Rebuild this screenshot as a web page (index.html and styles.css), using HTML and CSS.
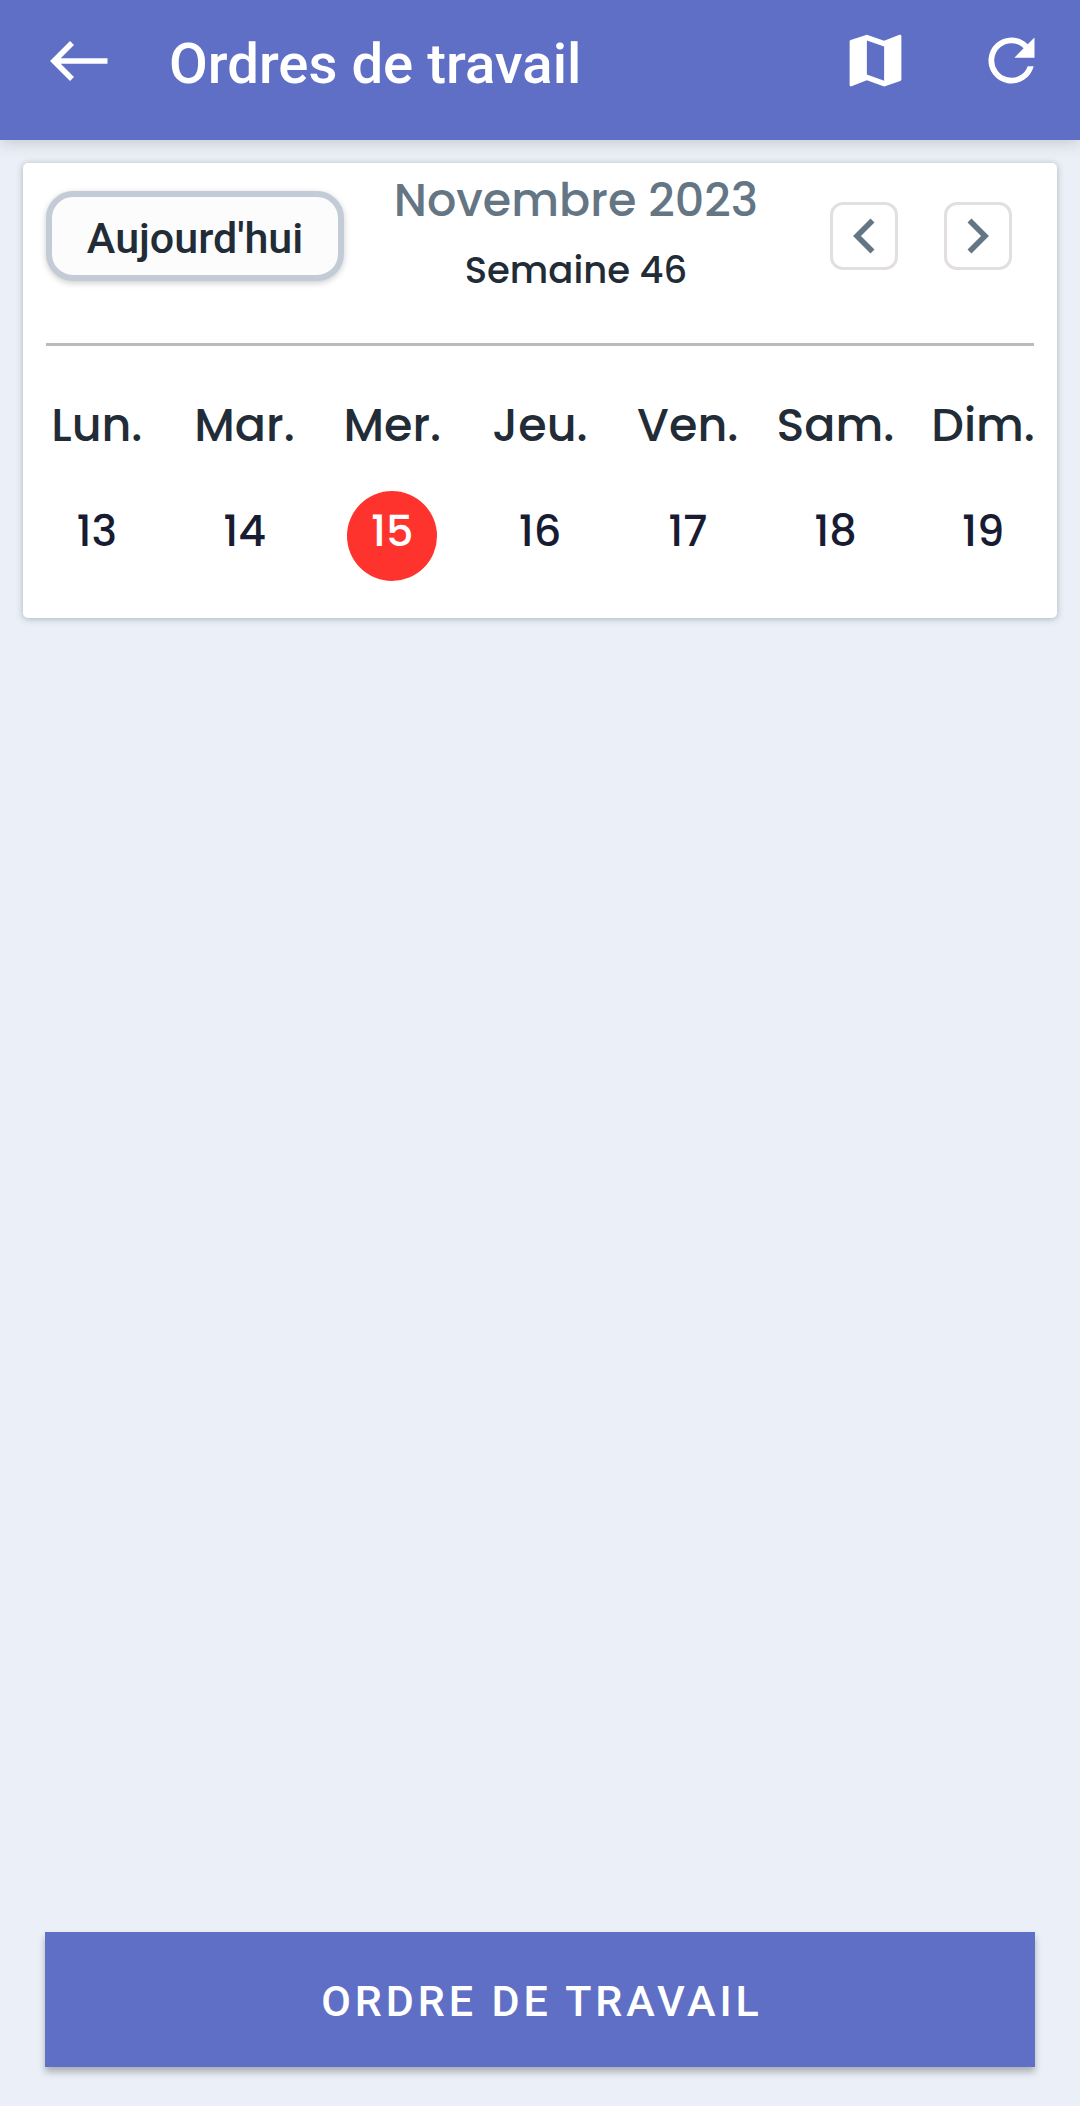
FILE: index.html
```html
<!DOCTYPE html>
<html lang="fr">
<head>
    <meta charset="UTF-8">
    <meta name="viewport" content="width=device-width, initial-scale=1.0">
    <title>Ordres de travail</title>
    <link rel="stylesheet" href="styles.css">
</head>
<body>
    <header class="topbar">
        <svg class="back-icon" viewBox="0 0 58 40">
            <path d="M57.500 20H5M22 2L4 20l18 18" fill="none" stroke="#fff" stroke-width="5.6"/>
        </svg>
        <h1 class="title">Ordres de travail</h1>
        <svg class="action-icon" viewBox="0 0 24 24">
            <path fill="#fff" d="M20.5 3l-.16.03L15 5.1 9 3 3.36 4.9c-.21.07-.36.25-.36.48V20.5c0 .28.22.5.5.5l.16-.03L9 18.9l6 2.1 5.64-1.9c.21-.07.36-.25.36-.48V3.5c0-.28-.22-.5-.5-.5zM15 19l-6-2.11V5l6 2.11V19z"/>
        </svg>
        <svg class="action-icon" viewBox="0 0 24 24">
            <path fill="#fff" d="M17.65 6.35A7.96 7.96 0 0 0 12 4a8 8 0 1 0 7.73 10h-2.08A6 6 0 1 1 12 6c1.66 0 3.14.69 4.22 1.78L13 11h7V4l-2.35 2.35z"/>
        </svg>
    </header>

    <!-- Calendrier de la semaine -->
    <main class="calendar">
        <div class="calendar-head">
            <button class="today-button">Aujourd'hui</button>
            <div class="period">
                <div class="month">Novembre 2023</div>
                <div class="week">Semaine 46</div>
            </div>
            <div class="nav">
                <button class="nav-button">
                    <svg class="chevron" viewBox="0 0 22 36"><path d="M19.500 2.500L4 18l15.500 15.500"/></svg>
                </button>
                <button class="nav-button">
                    <svg class="chevron" viewBox="0 0 22 36"><path d="M2.500 2.500L18 18 2.500 33.500"/></svg>
                </button>
            </div>
        </div>
        <div class="days">
            <div class="day"><span class="day-name">Lun.</span><span class="day-number">13</span></div>
            <div class="day"><span class="day-name">Mar.</span><span class="day-number">14</span></div>
            <div class="day"><span class="day-name">Mer.</span><span class="day-number active">15</span></div>
            <div class="day"><span class="day-name">Jeu.</span><span class="day-number">16</span></div>
            <div class="day"><span class="day-name">Ven.</span><span class="day-number">17</span></div>
            <div class="day"><span class="day-name">Sam.</span><span class="day-number">18</span></div>
            <div class="day"><span class="day-name">Dim.</span><span class="day-number">19</span></div>
        </div>
    </main>

    <button class="order-button">ORDRE DE TRAVAIL</button>
</body>
</html>
```
FILE: styles.css
```css
* {
    box-sizing: border-box;
}
body {
    font-family: Roboto, sans-serif;
    display: flex;
    flex-direction: column;
    min-height: 100vh;
    background-color: #ebf0f8;
    margin: 0;
}
button {
    font-family: Roboto, sans-serif;
    font-weight: 500;
    padding: 0;
}
.topbar {
    display: flex;
    align-items: center;
    height: 140px;
    padding: 0 34px 20px 50px;
    background-color: #5f6fc5;
    box-shadow: 0 3px 14px rgba(60, 70, 60, 0.22);
}
.back-icon {
    width: 58px;
    height: 40px;
    margin-top: 2px;
}
.title {
    flex: 1;
    margin: 7px 0 0 61px;
    color: #fff;
    font-size: 56.3px;
    font-weight: 500;
    line-height: 66px;
}
.action-icon {
    width: 69px;
    height: 69px;
    margin-left: 67px;
}
.calendar {
    height: 455px;
    margin: 23px 23px 0;
    background: #fff;
    border-radius: 5px;
    box-shadow: 0 1px 7px rgba(50, 60, 70, 0.35);
}
.calendar-head {
    display: flex;
    align-items: flex-start;
    height: 183px;
    margin: 0 23px;
    border-bottom: 3px solid #b9bbbc;
}
.today-button {
    width: 298px;
    height: 90px;
    margin-top: 28px;
    border: 6px solid #c3ccd6;
    border-radius: 27px;
    background-color: #fcfcfc;
    box-shadow: 0 2px 6px rgba(0, 0, 0, 0.2);
    color: #222c36;
    font-size: 43px;
    line-height: 50px;
    padding-top: 3px;
}
.period {
    flex: 1;
    padding-right: 22px;
    text-align: center;
}
.period, .days {
    font-family: Poppins, Inter, sans-serif;
    font-weight: 500;
}
.month {
    margin-top: 10px;
    color: #647584;
    font-size: 46px;
    line-height: 54px;
}
.week {
    margin-top: 20px;
    color: #222c36;
    font-size: 37px;
    line-height: 46px;
}
.nav {
    display: flex;
    gap: 46px;
    margin: 39px 22px 0 0;
}
.nav-button {
    display: flex;
    align-items: center;
    justify-content: center;
    width: 68px;
    height: 68px;
    border: 3px solid #e3dfe0;
    border-radius: 13px;
    background: #fff;
}
.chevron {
    width: 22px;
    height: 36px;
    fill: none;
    stroke: #647584;
    stroke-width: 5.6;
}
.days {
    display: grid;
    grid-template-columns: repeat(7, 1fr);
    padding-top: 52px;
}
.day {
    display: flex;
    flex-direction: column;
    align-items: center;
}
.day-name {
    color: #222c36;
    font-size: 46px;
    line-height: 54px;
}
.day-number {
    width: 90px;
    height: 90px;
    margin-top: 39px;
    padding-top: 14px;
    border-radius: 50%;
    color: #171c33;
    font-size: 43px;
    line-height: 52px;
    text-align: center;
}
.day-number.active {
    background-color: #ff332d;
    color: #fff;
}
.order-button {
    height: 135px;
    margin: auto 45px 39px;
    border: none;
    background-color: #5f6fc5;
    box-shadow: 0 5px 7px rgba(0, 0, 0, 0.28);
    color: #fff;
    font-size: 43px;
    line-height: 50px;
    letter-spacing: 3.9px;
    padding: 2px 0 0 4px;
}
```
